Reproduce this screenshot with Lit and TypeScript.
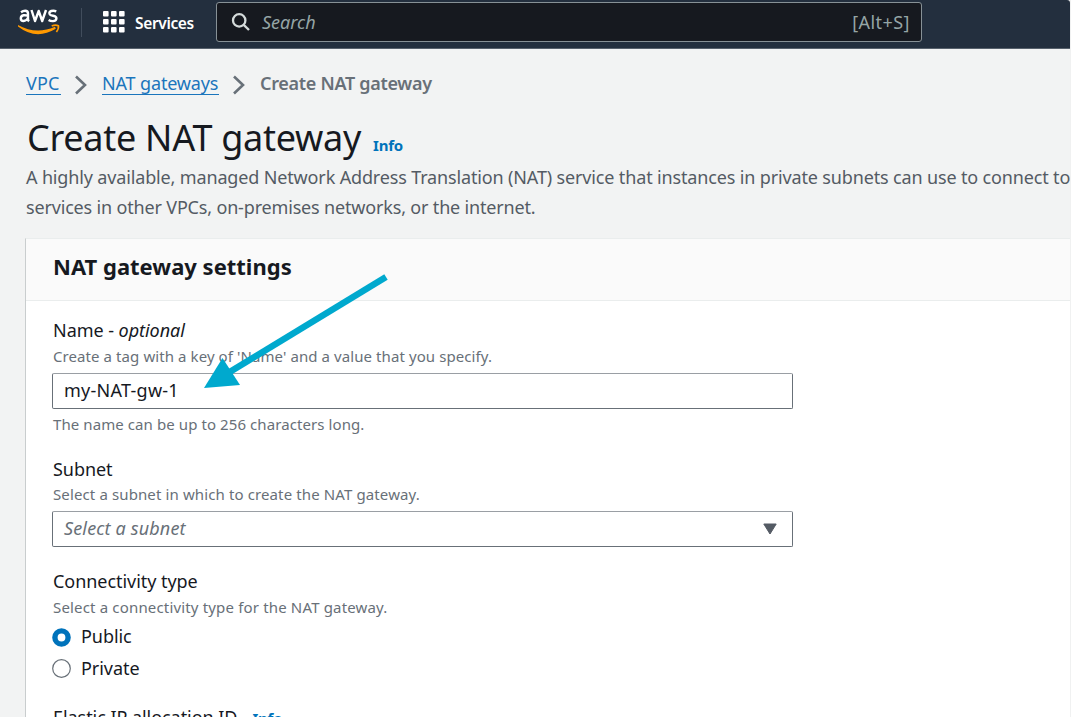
import { LitElement, html, css } from "lit";
import { customElement } from "lit/decorators.js";

const chevron = html`<svg class="chev" width="14" height="22" viewBox="0 0 14 22"><path d="M2 2.5 L11 11 L2 19.5" fill="none" stroke="#687078" stroke-width="2.6"/></svg>`;

@customElement("app-root")
export class AppRoot extends LitElement {
  static styles = css`
    :host { display: block; width: 1071px; height: 722px; overflow: hidden; background: #fff; font-family: "Noto Sans", sans-serif; color: #16191f; font-size: 18px; white-space: nowrap; }
    * { box-sizing: border-box; }
    svg { display: block; flex: none; }
    .screen { width: 1071px; height: 717px; overflow: hidden; background: #f2f3f3; border-right: 1px solid #f0f1f1; display: flex; flex-direction: column; }
    .top { flex: none; height: 49px; background: #232f3e; border-bottom: 1px solid #57616c; border-top-right-radius: 3px; display: flex; align-items: flex-start; color: #fff; }
    .aws { margin: 7px 0 0 17px; }
    .sep { width: 1px; height: 29px; margin: 8px 0 0 20px; background: #414d5c; }
    .grid { margin: 11px 0 0 21px; }
    .services { font-size: 15.5px; font-weight: 600; line-height: 24px; margin: 11px 0 0 10px; width: 81px; letter-spacing: -.35px; }
    .search { width: 706px; height: 40px; margin-top: 2px; border: 1px solid #879196; border-radius: 3px; background: #16191f; color: #95a5a6; display: flex; align-items: center; padding: 0 11px 1px 14px; }
    .ph { font-style: italic; flex: 1; margin-left: 11px; letter-spacing: 0; }
    .key { letter-spacing: .45px; }
    .main { padding-left: 26px; }
    .crumbs { display: flex; align-items: center; height: 69px; }
    .link { color: #1b75bc; border-bottom: 1px solid #1b75bc; line-height: 22px; }
    .vpc { width: 35px; letter-spacing: .2px; }
    .nat { width: 117px; letter-spacing: -.15px; }
    .chev { margin: 2px 14px 0 13px; }
    .cur { color: #687078; font-weight: 600; letter-spacing: -.3px; margin-top: -1px; }
    .title { display: flex; align-items: baseline; height: 45px; line-height: 40px; padding-left: 1px; }
    .h1 { font-size: 36px; letter-spacing: -.28px; }
    .info { color: #0073bb; font-weight: 700; font-size: 15px; letter-spacing: -.2px; }
    .title .info { margin-left: 12px; }
    .desc { color: #545b64; line-height: 29.5px; letter-spacing: -.148px; }
    .d2 { letter-spacing: -.17px; }
    .card { margin-top: 16px; margin-left: -1px; width: 1046px; height: 520px; background: #fff; border-left: 1px solid #c9cdce; border-top: 1px solid #eaeded; }
    .head { height: 62px; padding: 13px 0 0 27px; background: #fafafa; border-bottom: 1px solid #eaeded; font-size: 22px; line-height: 28px; font-weight: 700; letter-spacing: 0; }
    .body { padding: 16px 0 0 27px; width: 768px; display: flex; flex-direction: column; }
    .label { line-height: 26px; height: 26px; letter-spacing: -.05px; }
    .hint { line-height: 26px; height: 26px; font-size: 15px; color: #687078; letter-spacing: .085px; }
    .h3 { letter-spacing: .12px; }
    .h4 { letter-spacing: .165px; }
    .box { width: 741px; height: 36px; margin: 4px 0 0 -1px; border: 1px solid #687078; border-top-color: #9a9fa4; border-radius: 2px; padding: 0 15px 2px 11px; display: flex; align-items: center; justify-content: space-between; letter-spacing: .25px; }
    .sel { color: #687078; font-style: italic; letter-spacing: .15px; }
    .sel svg { margin-top: 2px; }
    .after { margin-top: 2px; }
    .f2 { margin-top: 19px; }
    .f2 + .hint { margin-top: -1px; }
    .f3 { margin-top: 21px; }
    .radio { display: flex; align-items: center; height: 31px; gap: 10px; margin-left: -1px; padding-top: 1px; letter-spacing: -.05px; }
    .radio svg { margin-top: 2px; }
    .radio + .radio { padding-top: 2px; }
    .f4 { margin-top: 22px; display: flex; align-items: baseline; gap: 15px; }
    .canvas { position: absolute; left: 190px; top: 260px; pointer-events: none; }
  `;

  render() {
    return html`
      <div class="screen">
        <div class="top">
          <svg class="aws" width="44" height="30" viewBox="17 7 44 30">
            <g fill="none" stroke="#fff" stroke-width="2.4" stroke-linejoin="round">
              <path d="M21 12.2 Q23 10.8 25.2 10.8 Q28 10.8 28 13.5 V18.5 Q28 20.5 29 21.4 M28 15.7 Q25.5 15 23.5 15.3 Q20.8 15.8 20.8 18.5 Q20.8 21 23.5 21 Q26.5 20.8 28 18"/>
              <path d="M31.5 10 L35 21 L38.7 11 L42.2 21 L46 10"/>
              <path d="M56.3 11.3 Q53.8 10.3 51.3 11 Q49 11.8 49.5 13.8 Q50 15.2 53 15.8 Q56.5 16.5 56.4 18.5 Q56.3 21 53 21.1 Q50.5 21.2 48.6 20"/>
            </g>
            <path d="M18 25 Q36 35.2 55 26.8 L55.8 28.8 Q36 40.5 18 26.5Z" fill="#f90"/>
            <path d="M51.7 26 Q55.5 24.5 58.4 25.8 Q59 28.5 56.4 32" fill="none" stroke="#f90" stroke-width="1.7"/>
          </svg>
          <div class="sep"></div>
          <svg class="grid" width="22" height="22" viewBox="0 0 22 22" fill="#fff">
            ${[0, 8, 16].map((y) => [0, 8, 16].map((x) => html`<svg x=${x} y=${y} width="6" height="6"><rect width="5.6" height="5.6" rx="1" fill="#fff"/></svg>`))}
          </svg>
          <div class="services">Services</div>
          <div class="search">
            <svg width="20" height="20" viewBox="0 0 20 20" fill="none" stroke="#d5dbdb" stroke-width="2.3"><circle cx="8.2" cy="8.4" r="6.2"/><path d="M12.7 12.9 L18 18"/></svg>
            <span class="ph">Search</span><span class="key">[Alt+S]</span>
          </div>
        </div>
        <div class="main">
          <div class="crumbs">
            <span class="link vpc">VPC</span>${chevron}<span class="link nat">NAT gateways</span>${chevron}<span class="cur">Create NAT gateway</span>
          </div>
          <div class="title"><span class="h1">Create NAT gateway</span><span class="info">Info</span></div>
          <div class="desc d1">A highly available, managed Network Address Translation (NAT) service that instances in private subnets can use to connect to</div>
          <div class="desc d2">services in other VPCs, on-premises networks, or the internet.</div>
          <div class="card">
            <div class="head">NAT gateway settings</div>
            <div class="body">
              <div class="label">Name - <i>optional</i></div>
              <div class="hint">Create a tag with a key of 'Name' and a value that you specify.</div>
              <div class="box">my-NAT-gw-1</div>
              <div class="hint after">The name can be up to 256 characters long.</div>
              <div class="label f2">Subnet</div>
              <div class="hint h3">Select a subnet in which to create the NAT gateway.</div>
              <div class="box sel"><span>Select a subnet</span><svg width="14" height="12" viewBox="0 0 14 12"><path d="M.8 1 H13.2 L7 11Z" fill="#545b64" stroke="#545b64" stroke-linejoin="round"/></svg></div>
              <div class="label f3">Connectivity type</div>
              <div class="hint h4">Select a connectivity type for the NAT gateway.</div>
              <div class="radio"><svg width="19" height="19" viewBox="0 0 19 19"><circle cx="9.5" cy="9.5" r="6.6" fill="#fff" stroke="#0073bb" stroke-width="5.4"/></svg>Public</div>
              <div class="radio"><svg width="19" height="19" viewBox="0 0 19 19"><circle cx="9.5" cy="9.5" r="8.8" fill="#fff" stroke="#687078" stroke-width="1.2"/></svg>Private</div>
              <div class="label f4"><span>Elastic IP allocation ID</span><span class="info">Info</span></div>
            </div>
          </div>
        </div>
      </div>
      <svg class="canvas" width="210" height="140" viewBox="190 260 210 140"><path d="M386 277 L228 373" stroke="#00a9ce" stroke-width="6.5" fill="none"/><path d="M204 388 L222.5 358 L240 385Z" fill="#00a9ce"/></svg>
    `;
  }
}
